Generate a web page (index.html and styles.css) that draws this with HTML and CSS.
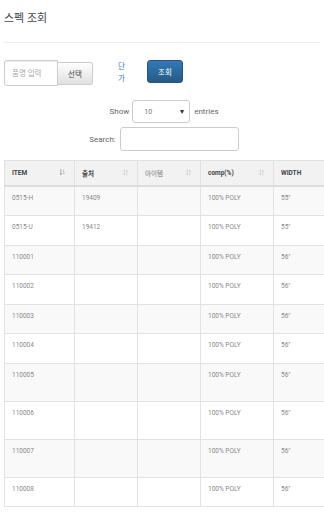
FILE: index.html
```html
<!DOCTYPE html>
<html lang="ko">

<head>
    <meta charset="UTF-8" />
    <meta name="viewport" content="width=device-width, initial-scale=1.0" />
    <title>스펙 조회</title>
    <link rel="stylesheet" href="styles.css">
</head>

<body>
    <h3 class="page-title">스펙 조회</h3>
    <hr class="divider">

    <div class="toolbar">
        <div class="input-group">
            <input class="form-control" type="text" placeholder="품명 입력">
            <button class="btn btn-default">선택</button>
        </div>
        <a class="price-link" href="#">단가</a>
        <button class="btn btn-primary">조회</button>
    </div>

    <div class="dt-length">
        <label>Show</label>
        <div class="select-box">
            <span>10</span>
            <span class="caret">&#9662;</span>
        </div>
        <label>entries</label>
    </div>

    <div class="dt-filter">
        <label>Search:</label>
        <input class="search-input" type="search">
    </div>

    <div class="table-wrap">
        <table class="spec-table">
            <thead>
                <tr>
                    <th class="col-item">ITEM
                        <svg class="sort on" viewBox="0 0 6 8"><path d="M1 0v6M0 5l1 2 1-2M3.5 1h.8M3.5 3h1.4M3.5 5h2" stroke="currentColor" stroke-width="0.8" fill="none"/></svg>
                    </th>
                    <th class="col-src">출처
                        <svg class="sort" viewBox="0 0 6 8"><path d="M1.5 0v7M0.5 5.5l1 1.5 1-1.5M4.5 1v7M3.5 2.5l1-1.5 1 1.5" stroke="currentColor" stroke-width="0.8" fill="none"/></svg>
                    </th>
                    <th class="col-name">아이템
                        <svg class="sort" viewBox="0 0 6 8"><path d="M1.5 0v7M0.5 5.5l1 1.5 1-1.5M4.5 1v7M3.5 2.5l1-1.5 1 1.5" stroke="currentColor" stroke-width="0.8" fill="none"/></svg>
                    </th>
                    <th class="col-comp">comp(%)
                        <svg class="sort" viewBox="0 0 6 8"><path d="M1.5 0v7M0.5 5.5l1 1.5 1-1.5M4.5 1v7M3.5 2.5l1-1.5 1 1.5" stroke="currentColor" stroke-width="0.8" fill="none"/></svg>
                    </th>
                    <th class="col-width">WIDTH</th>
                </tr>
            </thead>
            <tbody>
                <tr><td>0515-H</td><td>19409</td><td></td><td>100% POLY</td><td>55"</td></tr>
                <tr><td>0515-U</td><td>19412</td><td></td><td>100% POLY</td><td>55"</td></tr>
                <tr><td>110001</td><td></td><td></td><td>100% POLY</td><td>56"</td></tr>
                <tr><td>110002</td><td></td><td></td><td>100% POLY</td><td>56"</td></tr>
                <tr><td>110003</td><td></td><td></td><td>100% POLY</td><td>56"</td></tr>
                <tr><td>110004</td><td></td><td></td><td>100% POLY</td><td>56"</td></tr>
                <tr class="tall"><td>110005</td><td></td><td></td><td>100% POLY</td><td>56"</td></tr>
                <tr class="tall"><td>110006</td><td></td><td></td><td>100% POLY</td><td>56"</td></tr>
                <tr class="tall"><td>110007</td><td></td><td></td><td>100% POLY</td><td>56"</td></tr>
                <tr><td>110008</td><td></td><td></td><td>100% POLY</td><td>56"</td></tr>
            </tbody>
        </table>
    </div>
</body>

</html>
```

FILE: styles.css
```css
* {
    margin: 0;
    padding: 0;
    box-sizing: border-box;
    font-family: Roboto, "Noto Sans CJK KR", sans-serif;
}

body {
    padding: 0 0 0 4px;
    color: #333;
    background: #fff;
    overflow: hidden;
}

.page-title {
    padding-top: 11px;
    font-size: 11px;
    line-height: 16px;
    font-weight: normal;
    color: #444;
}

.divider {
    margin: 15px 4px 0 0;
    border: none;
    border-top: 1px solid #eee;
}

/* toolbar */
.toolbar {
    display: flex;
    align-items: center;
    margin-top: 17px;
    height: 26px;
}

.input-group {
    display: flex;
    align-items: center;
}

.form-control {
    width: 54px;
    height: 26px;
    padding: 0 7px;
    border: 1px solid #ccc;
    border-radius: 3px 0 0 3px;
    font-size: 7.5px;
    color: #555;
    box-shadow: inset 0 1px 1px rgba(0, 0, 0, 0.075);
    outline: none;
}

.form-control::placeholder {
    color: #aaa;
}

.btn {
    cursor: pointer;
    font-size: 7.5px;
}

.btn-default {
    width: 35px;
    height: 23px;
    border: 1px solid #ccc;
    border-left: none;
    border-radius: 0 3px 3px 0;
    background: linear-gradient(#fff, #e0e0e0);
    color: #444;
}

.price-link {
    display: block;
    width: 8px;
    margin-left: 25px;
    font-size: 7.5px;
    line-height: 12px;
    color: #337ab7;
    text-decoration: none;
    word-break: break-all;
}

.btn-primary {
    width: 36px;
    height: 23px;
    margin-left: 21px;
    margin-top: -4px;
    border: 1px solid #245580;
    border-radius: 3px;
    background: linear-gradient(#337ab7, #265a88);
    color: #fff;
}

/* datatable controls */
.dt-length,
.dt-filter {
    display: flex;
    justify-content: center;
    align-items: center;
    font-size: 8px;
    color: #666;
}

.dt-length {
    margin-top: 14px;
    gap: 3px;
}

.select-box {
    display: flex;
    justify-content: space-between;
    align-items: center;
    width: 58px;
    height: 23px;
    margin-right: 1px;
    padding: 0 5px 0 11px;
    border: 1px solid #ccc;
    border-radius: 3px;
    font-size: 7px;
    color: #777;
}

.caret {
    font-size: 8px;
    color: #333;
}

.dt-filter {
    margin-top: 4px;
    gap: 4px;
}

.search-input {
    width: 119px;
    height: 24px;
    border: 1px solid #ccc;
    border-radius: 3px;
    outline: none;
}

/* table */
.table-wrap {
    margin-top: 9px;
    overflow: hidden;
}

.spec-table {
    width: 360px;
    table-layout: fixed;
    border-collapse: collapse;
    border: 1px solid #ddd;
    font-size: 6.5px;
    color: #888;
}

.spec-table th,
.spec-table td {
    border: 1px solid #e2e2e2;
    padding: 7px 7px;
    text-align: left;
    vertical-align: top;
}

.spec-table th {
    position: relative;
    height: 23px;
    vertical-align: middle;
    background: #f2f2f2;
    color: #444;
    font-weight: bold;
    border-bottom: 2px solid #ddd;
}

.spec-table th.col-name {
    font-weight: normal;
    color: #777;
}

.col-item { width: 70px; }
.col-src { width: 63px; }
.col-name { width: 63px; }
.col-comp { width: 73px; }
.col-width { width: 91px; }

.sort {
    position: absolute;
    right: 9px;
    top: 8px;
    width: 5px;
    height: 7px;
    color: #ccc;
}

.sort.on {
    color: #888;
}

.spec-table tbody tr {
    height: 29.5px;
}

.spec-table tbody tr.tall {
    height: 38px;
}

.spec-table tbody tr:nth-child(odd) {
    background: #f9f9f9;
}
```
